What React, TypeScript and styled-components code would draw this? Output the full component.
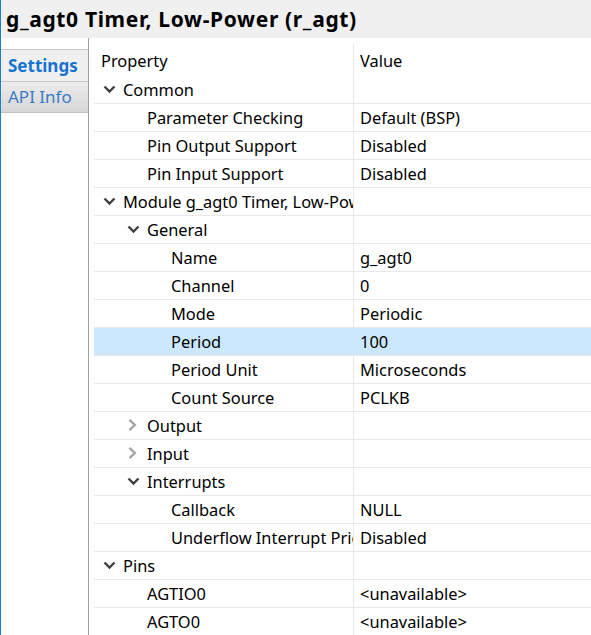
import React from "react";
import styled, { createGlobalStyle } from "styled-components";

const Global = createGlobalStyle`
  html, body { margin: 0; padding: 0; background: #ffffff; }
  body { font-family: "Noto Sans", "Open Sans", sans-serif; }
  #root { width: 591px; height: 635px; overflow: hidden; }
`;

const Frame = styled.div`
  width: 591px;
  height: 635px;
  display: flex;
  flex-direction: column;
  border-left: 1px solid #1a7fd4;
  box-sizing: border-box;
  overflow: hidden;
`;

const TitleBar = styled.div`
  height: 38px;
  flex: none;
  background: #f0f0f0;
  display: flex;
  align-items: center;
  padding-left: 5px;
  font-size: 21px;
  letter-spacing: 0.65px;
  font-weight: 700;
  color: #000;
  white-space: nowrap;
`;

const Body = styled.div`
  flex: 1;
  display: flex;
  min-height: 0;
`;

const TabColumn = styled.div`
  width: 87px;
  flex: none;
  border-right: 1px solid #a0a0a0;
  padding-top: 11px;
  display: flex;
  flex-direction: column;
`;

const Tab = styled.div<{ $active?: boolean }>`
  height: 32px;
  display: flex;
  align-items: center;
  padding-left: 7px;
  padding-bottom: 1px;
  box-sizing: border-box;
  font-size: 17px;
  font-weight: ${(p) => (p.$active ? 700 : 400)};
  color: ${(p) => (p.$active ? "#1673d1" : "#3a7bc8")};
  background: ${(p) =>
    p.$active ? "#f0f0f0" : "linear-gradient(#ececec, #d6d6d6)"};
  border-top: 1px solid #c8c8c8;
  &:last-child {
    border-bottom: 1px solid #c0c0c0;
  }
`;

const TablePane = styled.div`
  flex: 1;
  padding-left: 5px;
  padding-top: 6px;
  display: flex;
  flex-direction: column;
  min-width: 0;
`;

const Row = styled.div<{ $selected?: boolean; $header?: boolean }>`
  display: grid;
  grid-template-columns: 259px 1px 1fr;
  height: ${(p) => (p.$header ? "31px" : "27px")};
  border-bottom: 1px solid ${(p) => (p.$header ? "transparent" : "#e8e8e8")};
  background: ${(p) => (p.$selected ? "#cce8ff" : "transparent")};
  font-size: 16.4px;
  color: #000;
  flex: none;
`;

const NameCell = styled.div<{ $indent: number; $header?: boolean }>`
  display: flex;
  align-items: center;
  padding-left: ${(p) => p.$indent}px;
  padding-top: ${(p) => (p.$header ? 2 : 0)}px;
  padding-bottom: ${(p) => (p.$header ? 0 : 1)}px;
  white-space: nowrap;
  overflow: hidden;
  box-sizing: border-box;
`;

const Sep = styled.div<{ $selected?: boolean }>`
  background: ${(p) => (p.$selected ? "#cce8ff" : "#e8e8e8")};
`;

const ValueCell = styled.div<{ $header?: boolean }>`
  display: flex;
  align-items: center;
  padding-left: 6px;
  padding-top: ${(p) => (p.$header ? 2 : 0)}px;
  padding-bottom: ${(p) => (p.$header ? 0 : 1)}px;
  white-space: nowrap;
  overflow: hidden;
`;

const Twisty = styled.span`
  width: 20px;
  margin-left: -20px;
  flex: none;
  display: inline-flex;
  align-items: center;
  justify-content: flex-start;
`;

const ChevronDown = () => (
  <svg width="14" height="10" viewBox="0 0 14 10">
    <path d="M1.5 2.5 L6.5 7.5 L11.5 2.5" fill="none" stroke="#404040" strokeWidth="2.4" />
  </svg>
);

const ChevronRight = () => (
  <svg width="14" height="14" viewBox="0 0 14 14">
    <path d="M2.5 1.8 L7.8 7 L2.5 12.2" fill="none" stroke="#a6a6a6" strokeWidth="2.4" />
  </svg>
);

type Item = {
  name: string;
  value?: string;
  level: number;
  expander?: "open" | "closed";
  selected?: boolean;
};

const items: Item[] = [
  { name: "Common", level: 1, expander: "open" },
  { name: "Parameter Checking", value: "Default (BSP)", level: 2 },
  { name: "Pin Output Support", value: "Disabled", level: 2 },
  { name: "Pin Input Support", value: "Disabled", level: 2 },
  { name: "Module g_agt0 Timer, Low-Power (r_agt)", level: 1, expander: "open" },
  { name: "General", level: 2, expander: "open" },
  { name: "Name", value: "g_agt0", level: 3 },
  { name: "Channel", value: "0", level: 3 },
  { name: "Mode", value: "Periodic", level: 3 },
  { name: "Period", value: "100", level: 3, selected: true },
  { name: "Period Unit", value: "Microseconds", level: 3 },
  { name: "Count Source", value: "PCLKB", level: 3 },
  { name: "Output", level: 2, expander: "closed" },
  { name: "Input", level: 2, expander: "closed" },
  { name: "Interrupts", level: 2, expander: "open" },
  { name: "Callback", value: "NULL", level: 3 },
  { name: "Underflow Interrupt Priority", value: "Disabled", level: 3 },
  { name: "Pins", level: 1, expander: "open" },
  { name: "AGTIO0", value: "<unavailable>", level: 2 },
  { name: "AGTO0", value: "<unavailable>", level: 2 },
];

export default function App() {
  return (
    <>
      <Global />
      <Frame>
        <TitleBar>g_agt0 Timer, Low-Power (r_agt)</TitleBar>
        <Body>
          <TabColumn>
            <Tab $active>Settings</Tab>
            <Tab>API Info</Tab>
          </TabColumn>
          <TablePane>
            <Row $header>
              <NameCell $indent={7} $header>
                Property
              </NameCell>
              <Sep />
              <ValueCell $header>Value</ValueCell>
            </Row>
            {items.map((it, i) => (
              <Row key={i} $selected={it.selected}>
                <NameCell $indent={5 + it.level * 24}>
                  {it.expander && (
                    <Twisty>
                      {it.expander === "open" ? <ChevronDown /> : <ChevronRight />}
                    </Twisty>
                  )}
                  {it.name}
                </NameCell>
                <Sep $selected={it.selected} />
                <ValueCell>{it.value ?? ""}</ValueCell>
              </Row>
            ))}
          </TablePane>
        </Body>
      </Frame>
    </>
  );
}
